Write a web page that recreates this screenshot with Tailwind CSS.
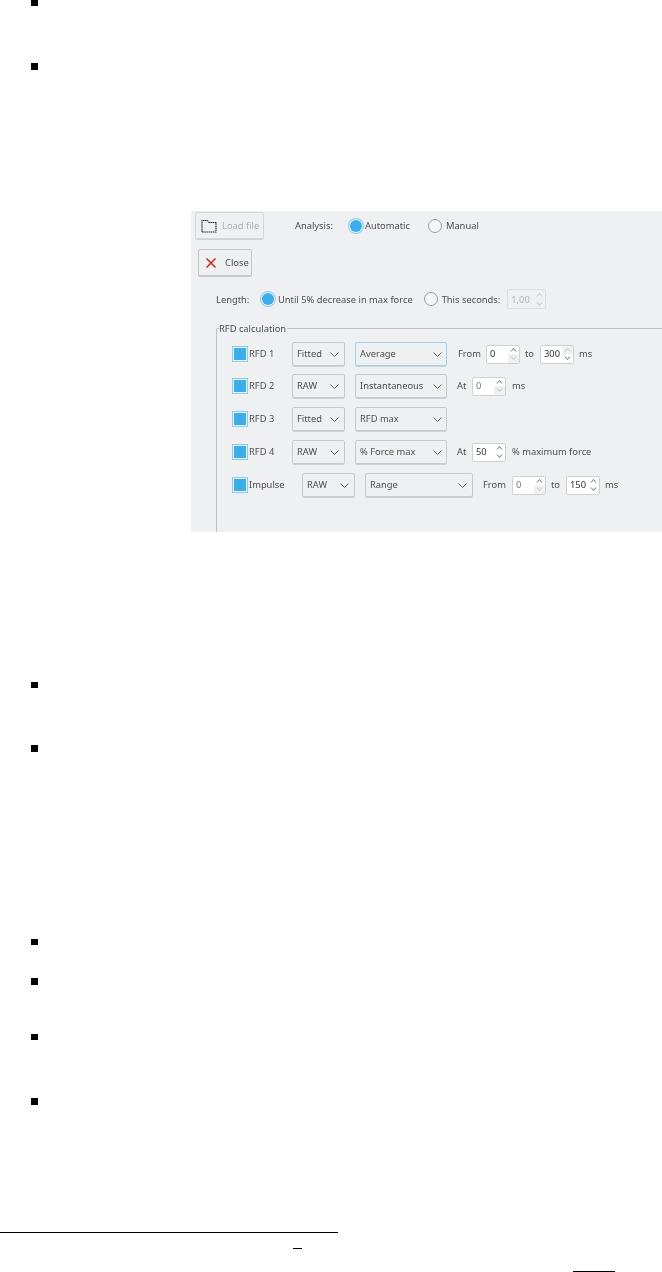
<!DOCTYPE html>
<html lang="en">
<head>
    <meta charset="UTF-8">
    <meta name="viewport" content="width=device-width, initial-scale=1.0">
    <title>RFD analysis</title>
    <script src="https://cdn.jsdelivr.net/npm/@tailwindcss/browser@4"></script>
</head>
<body class="bg-white font-['Noto_Sans',sans-serif]">
    <div class="w-[662px] h-[1272px] overflow-hidden">
        <!-- Top bullets -->
        <div class="h-[211px] pl-[31px]">
            <div class="w-[7px] h-[6px] bg-black"></div>
            <div class="w-[7px] h-[7px] bg-black mt-[57px]"></div>
        </div>

        <!-- Application window -->
        <div class="ml-[191px] w-[471px] h-[321px] bg-[#eff0f1] overflow-hidden">
        <div class="h-full text-[9.33px] text-[#4d4d4d] flex flex-col blur-[0.35px]">
            <div class="flex items-center h-[27px] mt-[1px] pl-[4px] shrink-0">
                <div class="w-[69px] h-[27px] border border-[#d5d6d7] rounded-[2px] flex items-center shadow-[0_1px_0_#d0d1d2] text-[#aeafb0]">
                    <svg class="ml-[5px] shrink-0" width="16" height="14" viewBox="0 0 16 14" fill="none" stroke="#222" stroke-width="1.100" stroke-dasharray="1.500 .6"><path d="M1 13V1.500h5.500l1.500 2h7V13z"/></svg>
                    <span class="ml-[5px]">Load file</span>
                </div>
                <span class="ml-[31px]">Analysis:</span>
                <span class="ml-[17px] w-[12px] h-[12px] rounded-full bg-[#3daee9] ring-1 ring-[#8ccdf0] ring-offset-1 ring-offset-[#eff0f1]"></span>
                <span class="ml-[3px]">Automatic</span>
                <span class="ml-[18px] w-[14px] h-[14px] rounded-full border border-[#9a9b9c] bg-[#f4f5f5]"></span>
                <span class="ml-[4px]">Manual</span>
            </div>
            <div class="pl-[7px] mt-[10px] shrink-0">
                <div class="w-[54px] h-[27px] border border-[#c5c6c7] rounded-[2px] flex items-center shadow-[0_1px_0_#c8c9ca]">
                    <svg class="ml-[7px] shrink-0" width="10" height="10" viewBox="0 0 10 10" fill="none" stroke="#c62a20" stroke-width="1.500"><path d="M.5.5l9 9M9.500.5l-9 9"/></svg>
                    <span class="ml-[9px]">Close</span>
                </div>
            </div>
            <div class="flex items-center h-[20px] mt-[13px] pl-[25px] shrink-0">
                <span class="w-[46px] pt-[2px]">Length:</span>
                <span class="w-[12px] h-[12px] rounded-full bg-[#3daee9] ring-1 ring-[#8ccdf0] ring-offset-1 ring-offset-[#eff0f1]"></span>
                <span class="ml-[4px] pt-[2px] whitespace-nowrap">Until 5% decrease in max force</span>
                <span class="ml-[11px] w-[14px] h-[14px] rounded-full border border-[#9a9b9c] bg-[#f4f5f5]"></span>
                <span class="ml-[4px] pt-[2px] whitespace-nowrap">This seconds:</span>
                <div class="ml-[7px] w-[39px] h-[20px] border border-[#dcddde] rounded-[2px] flex items-center justify-between pl-[3px] pr-[2px] text-[#b4b5b6]">
                    <span class="pt-[2px]">1,00</span>
                    <svg width="7" height="15" viewBox="0 0 7 15" fill="none" stroke="#b4b5b6" stroke-width=".8"><path d="M1 4.500l2.500-3 2.500 3M1 10.500l2.500 3 2.500-3"/></svg>
                </div>
            </div>

            <!-- RFD group -->
            <div class="relative flex-1 ml-[25px] mt-[19px] border-l border-t border-[#bcbdbe] rounded-tl-[2px] pt-[13px] pl-[17px]">
                <span class="absolute left-[2px] top-[-6px] bg-[#eff0f1] pr-[1px] leading-[11px] whitespace-nowrap">RFD calculation</span>

                <div class="flex items-center h-[24px]">
                    <span class="w-[12px] h-[12px] bg-[#3daee9] ring-1 ring-[#8ccdf0] ring-offset-1 ring-offset-[#eff0f1]"></span>
                    <span class="ml-[3px] w-[43px]">RFD 1</span>
                    <div class="w-[53px] h-[24px] border border-[#c8c9ca] rounded-[2px] flex items-center justify-between pl-[4px] pr-[5px] shadow-[0_1px_0_#d0d1d2]">
                        <span>Fitted</span>
                        <svg width="9" height="5" viewBox="0 0 9 5" fill="none" stroke="#4d4d4d" stroke-width=".9"><path d="M.5.5l4 4 4-4"/></svg>
                    </div>
                    <div class="ml-[10px] w-[92px] h-[24px] border border-[#9ad2f0] rounded-[2px] flex items-center justify-between pl-[4px] pr-[4px] shadow-[0_1px_0_#d0d1d2]">
                        <span>Average</span>
                        <svg width="9" height="5" viewBox="0 0 9 5" fill="none" stroke="#4d4d4d" stroke-width=".9"><path d="M.5.5l4 4 4-4"/></svg>
                    </div>
                    <span class="ml-[11px] w-[28px]">From</span>
                    <div class="w-[34px] h-[19px] bg-white border border-[#cfd0d1] rounded-[2px] flex items-center justify-between pl-[3px] text-[#333]">
                        <span>0</span>
                        <div class="w-[11px] h-full flex flex-col items-center">
                            <div class="h-1/2 w-full flex items-center justify-center"><svg width="7" height="4" viewBox="0 0 7 4" fill="none" stroke="#4d4d4d" stroke-width=".8"><path d="M1 3.500l2.500-3 2.500 3"/></svg></div>
                            <div class="h-1/2 w-full flex items-center justify-center bg-[#eff0f1]"><svg width="7" height="4" viewBox="0 0 7 4" fill="none" stroke="#b4b5b6" stroke-width=".8"><path d="M1 .5l2.500 3 2.500-3"/></svg></div>
                        </div>
                    </div>
                    <span class="ml-[5px] w-[15px]">to</span>
                    <div class="w-[34px] h-[19px] bg-white border border-[#cfd0d1] rounded-[2px] flex items-center justify-between pl-[3px] text-[#333]">
                        <span>300</span>
                        <div class="w-[11px] h-full flex flex-col items-center">
                            <div class="h-1/2 w-full flex items-center justify-center bg-[#eff0f1]"><svg width="7" height="4" viewBox="0 0 7 4" fill="none" stroke="#b4b5b6" stroke-width=".8"><path d="M1 3.500l2.500-3 2.500 3"/></svg></div>
                            <div class="h-1/2 w-full flex items-center justify-center"><svg width="7" height="4" viewBox="0 0 7 4" fill="none" stroke="#4d4d4d" stroke-width=".8"><path d="M1 .5l2.500 3 2.500-3"/></svg></div>
                        </div>
                    </div>
                    <span class="ml-[5px]">ms</span>
                </div>

                <div class="flex items-center h-[24px] mt-[8px]">
                    <span class="w-[12px] h-[12px] bg-[#3daee9] ring-1 ring-[#8ccdf0] ring-offset-1 ring-offset-[#eff0f1]"></span>
                    <span class="ml-[3px] w-[43px]">RFD 2</span>
                    <div class="w-[53px] h-[24px] border border-[#c8c9ca] rounded-[2px] flex items-center justify-between pl-[4px] pr-[5px] shadow-[0_1px_0_#d0d1d2]">
                        <span>RAW</span>
                        <svg width="9" height="5" viewBox="0 0 9 5" fill="none" stroke="#4d4d4d" stroke-width=".9"><path d="M.5.5l4 4 4-4"/></svg>
                    </div>
                    <div class="ml-[10px] w-[92px] h-[24px] border border-[#c8c9ca] rounded-[2px] flex items-center justify-between pl-[4px] pr-[4px] shadow-[0_1px_0_#d0d1d2]">
                        <span>Instantaneous</span>
                        <svg width="9" height="5" viewBox="0 0 9 5" fill="none" stroke="#4d4d4d" stroke-width=".9"><path d="M.5.5l4 4 4-4"/></svg>
                    </div>
                    <span class="ml-[10px] w-[15px]">At</span>
                    <div class="w-[34px] h-[19px] bg-white border border-[#cfd0d1] rounded-[2px] flex items-center justify-between pl-[3px] text-[#777]">
                        <span>0</span>
                        <div class="w-[11px] h-full flex flex-col items-center">
                            <div class="h-1/2 w-full flex items-center justify-center"><svg width="7" height="4" viewBox="0 0 7 4" fill="none" stroke="#4d4d4d" stroke-width=".8"><path d="M1 3.500l2.500-3 2.500 3"/></svg></div>
                            <div class="h-1/2 w-full flex items-center justify-center bg-[#eff0f1]"><svg width="7" height="4" viewBox="0 0 7 4" fill="none" stroke="#b4b5b6" stroke-width=".8"><path d="M1 .5l2.500 3 2.500-3"/></svg></div>
                        </div>
                    </div>
                    <span class="ml-[6px]">ms</span>
                </div>

                <div class="flex items-center h-[24px] mt-[9px]">
                    <span class="w-[12px] h-[12px] bg-[#3daee9] ring-1 ring-[#8ccdf0] ring-offset-1 ring-offset-[#eff0f1]"></span>
                    <span class="ml-[3px] w-[43px]">RFD 3</span>
                    <div class="w-[53px] h-[24px] border border-[#c8c9ca] rounded-[2px] flex items-center justify-between pl-[4px] pr-[5px] shadow-[0_1px_0_#d0d1d2]">
                        <span>Fitted</span>
                        <svg width="9" height="5" viewBox="0 0 9 5" fill="none" stroke="#4d4d4d" stroke-width=".9"><path d="M.5.5l4 4 4-4"/></svg>
                    </div>
                    <div class="ml-[10px] w-[92px] h-[24px] border border-[#c8c9ca] rounded-[2px] flex items-center justify-between pl-[4px] pr-[4px] shadow-[0_1px_0_#d0d1d2]">
                        <span>RFD max</span>
                        <svg width="9" height="5" viewBox="0 0 9 5" fill="none" stroke="#4d4d4d" stroke-width=".9"><path d="M.5.5l4 4 4-4"/></svg>
                    </div>
                </div>

                <div class="flex items-center h-[24px] mt-[9px]">
                    <span class="w-[12px] h-[12px] bg-[#3daee9] ring-1 ring-[#8ccdf0] ring-offset-1 ring-offset-[#eff0f1]"></span>
                    <span class="ml-[3px] w-[43px]">RFD 4</span>
                    <div class="w-[53px] h-[24px] border border-[#c8c9ca] rounded-[2px] flex items-center justify-between pl-[4px] pr-[5px] shadow-[0_1px_0_#d0d1d2]">
                        <span>RAW</span>
                        <svg width="9" height="5" viewBox="0 0 9 5" fill="none" stroke="#4d4d4d" stroke-width=".9"><path d="M.5.5l4 4 4-4"/></svg>
                    </div>
                    <div class="ml-[10px] w-[92px] h-[24px] border border-[#c8c9ca] rounded-[2px] flex items-center justify-between pl-[4px] pr-[4px] shadow-[0_1px_0_#d0d1d2]">
                        <span>% Force max</span>
                        <svg width="9" height="5" viewBox="0 0 9 5" fill="none" stroke="#4d4d4d" stroke-width=".9"><path d="M.5.5l4 4 4-4"/></svg>
                    </div>
                    <span class="ml-[10px] w-[15px]">At</span>
                    <div class="w-[34px] h-[19px] bg-white border border-[#cfd0d1] rounded-[2px] flex items-center justify-between pl-[3px] text-[#333]">
                        <span>50</span>
                        <div class="w-[11px] h-full flex flex-col items-center">
                            <div class="h-1/2 w-full flex items-center justify-center"><svg width="7" height="4" viewBox="0 0 7 4" fill="none" stroke="#4d4d4d" stroke-width=".8"><path d="M1 3.500l2.500-3 2.500 3"/></svg></div>
                            <div class="h-1/2 w-full flex items-center justify-center"><svg width="7" height="4" viewBox="0 0 7 4" fill="none" stroke="#4d4d4d" stroke-width=".8"><path d="M1 .5l2.500 3 2.500-3"/></svg></div>
                        </div>
                    </div>
                    <span class="ml-[6px] whitespace-nowrap">% maximum force</span>
                </div>

                <div class="flex items-center h-[24px] mt-[9px]">
                    <span class="w-[12px] h-[12px] bg-[#3daee9] ring-1 ring-[#8ccdf0] ring-offset-1 ring-offset-[#eff0f1]"></span>
                    <span class="ml-[3px] w-[53px]">Impulse</span>
                    <div class="w-[53px] h-[24px] border border-[#c8c9ca] rounded-[2px] flex items-center justify-between pl-[4px] pr-[5px] shadow-[0_1px_0_#d0d1d2]">
                        <span>RAW</span>
                        <svg width="9" height="5" viewBox="0 0 9 5" fill="none" stroke="#4d4d4d" stroke-width=".9"><path d="M.5.5l4 4 4-4"/></svg>
                    </div>
                    <div class="ml-[10px] w-[108px] h-[24px] border border-[#c8c9ca] rounded-[2px] flex items-center justify-between pl-[4px] pr-[5px] shadow-[0_1px_0_#d0d1d2]">
                        <span>Range</span>
                        <svg width="9" height="5" viewBox="0 0 9 5" fill="none" stroke="#4d4d4d" stroke-width=".9"><path d="M.5.5l4 4 4-4"/></svg>
                    </div>
                    <span class="ml-[10px] w-[29px]">From</span>
                    <div class="w-[34px] h-[19px] bg-white border border-[#cfd0d1] rounded-[2px] flex items-center justify-between pl-[3px] text-[#777]">
                        <span>0</span>
                        <div class="w-[11px] h-full flex flex-col items-center">
                            <div class="h-1/2 w-full flex items-center justify-center"><svg width="7" height="4" viewBox="0 0 7 4" fill="none" stroke="#4d4d4d" stroke-width=".8"><path d="M1 3.500l2.500-3 2.500 3"/></svg></div>
                            <div class="h-1/2 w-full flex items-center justify-center bg-[#eff0f1]"><svg width="7" height="4" viewBox="0 0 7 4" fill="none" stroke="#b4b5b6" stroke-width=".8"><path d="M1 .5l2.500 3 2.500-3"/></svg></div>
                        </div>
                    </div>
                    <span class="ml-[5px] w-[15px]">to</span>
                    <div class="w-[34px] h-[19px] bg-white border border-[#cfd0d1] rounded-[2px] flex items-center justify-between pl-[3px] text-[#333]">
                        <span>150</span>
                        <div class="w-[11px] h-full flex flex-col items-center">
                            <div class="h-1/2 w-full flex items-center justify-center"><svg width="7" height="4" viewBox="0 0 7 4" fill="none" stroke="#4d4d4d" stroke-width=".8"><path d="M1 3.500l2.500-3 2.500 3"/></svg></div>
                            <div class="h-1/2 w-full flex items-center justify-center"><svg width="7" height="4" viewBox="0 0 7 4" fill="none" stroke="#4d4d4d" stroke-width=".8"><path d="M1 .5l2.500 3 2.500-3"/></svg></div>
                        </div>
                    </div>
                    <span class="ml-[5px]">ms</span>
                </div>
            </div>
        </div>
        </div>

        <!-- Lower bullets -->
        <div class="pl-[31px] pt-[150px]">
            <div class="w-[7px] h-[6px] bg-black"></div>
            <div class="w-[7px] h-[7px] bg-black mt-[57px]"></div>
            <div class="w-[7px] h-[6px] bg-black mt-[187px]"></div>
            <div class="w-[7px] h-[7px] bg-black mt-[33px]"></div>
            <div class="w-[7px] h-[6px] bg-black mt-[49px]"></div>
            <div class="w-[7px] h-[7px] bg-black mt-[58px]"></div>
        </div>

        <!-- Footnote rule and formula bars -->
        <div class="w-[338px] h-px bg-black mt-[127px]"></div>
        <div class="w-[9px] h-px bg-black ml-[293px] mt-[15px]"></div>
        <div class="w-[42px] h-px bg-black ml-[573px] mt-[22px]"></div>
    </div>
</body>
</html>
